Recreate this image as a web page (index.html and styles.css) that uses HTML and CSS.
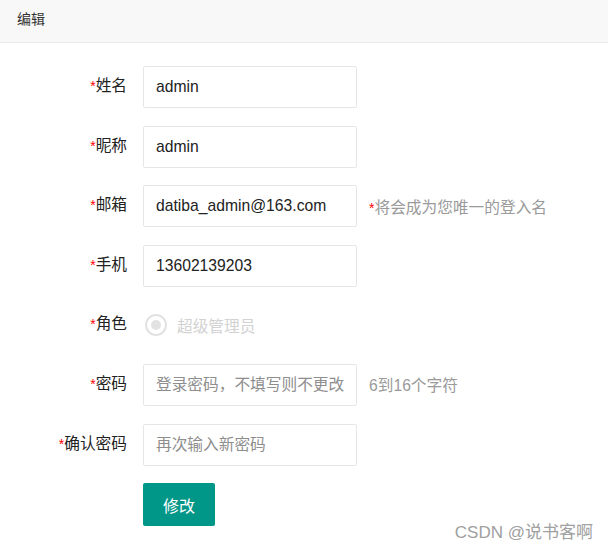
FILE: index.html
```html
<!DOCTYPE html>
<html lang="zh">
<head>
<meta charset="utf-8">
<title>编辑</title>
<link rel="stylesheet" href="styles.css">
</head>
<body>
<div class="card">
  <div class="card-header">编辑</div>
  <form class="form">
    <div class="item">
      <label class="label"><span class="req">*</span>姓名</label>
      <input class="input" type="text" value="admin">
    </div>
    <div class="item">
      <label class="label"><span class="req">*</span>昵称</label>
      <input class="input" type="text" value="admin">
    </div>
    <div class="item">
      <label class="label"><span class="req">*</span>邮箱</label>
      <input class="input" type="text" value="datiba_admin@163.com">
      <div class="aux"><span class="req">*</span>将会成为您唯一的登入名</div>
    </div>
    <div class="item">
      <label class="label"><span class="req">*</span>手机</label>
      <input class="input" type="text" value="13602139203">
    </div>
    <div class="item">
      <label class="label"><span class="req">*</span>角色</label>
      <div class="radio"><span class="radio-icon"></span><span class="radio-text">超级管理员</span></div>
    </div>
    <div class="item">
      <label class="label"><span class="req">*</span>密码</label>
      <input class="input" type="password" placeholder="登录密码，不填写则不更改">
      <div class="aux">6到16个字符</div>
    </div>
    <div class="item">
      <label class="label"><span class="req">*</span>确认密码</label>
      <input class="input" type="password" placeholder="再次输入新密码">
    </div>
    <div class="item item-btn">
      <button class="btn" type="button">修改</button>
    </div>
  </form>
</div>
<div class="watermark">CSDN @说书客啊</div>
</body>
</html>
```

FILE: styles.css
```css
html, body {
  margin: 0;
  padding: 0;
  background: #fff;
}
body {
  font-family: "Liberation Sans", Arial, "Noto Sans CJK SC", sans-serif;
  color: #333;
  width: 608px;
  height: 551px;
  overflow: hidden;
  position: relative;
}
.card-header {
  height: 42px;
  line-height: 39px;
  padding: 0 17px;
  background: #f8f8f8;
  border-bottom: 1px solid #eaeaea;
  font-size: 14px;
  color: #333;
}
.form {
  padding-top: 23px;
  display: flex;
  flex-direction: column;
  gap: 17.6px;
}
.item {
  display: flex;
  align-items: center;
  height: 42px;
}
.item-btn {
  height: 43px;
}
.label {
  width: 127px;
  padding-right: 16px;
  text-align: right;
  font-size: 15.7px;
  line-height: 20px;
  margin-top: -2px;
  color: #222;
  flex: none;
}
.req {
  color: #f00;
  font-size: 14px;
}
.input {
  box-sizing: border-box;
  width: 214px;
  height: 42px;
  border: 1px solid #e6e6e6;
  border-radius: 2px;
  padding: 0 12px;
  font-family: "Liberation Sans", Arial, "Noto Sans CJK SC", sans-serif;
  font-size: 15.7px;
  color: #222;
  background: #fff;
  outline: none;
  flex: none;
  margin: 0;
}
.input::placeholder {
  color: #8e8e8e;
}
.aux {
  margin-left: 12px;
  font-size: 15.7px;
  color: #9a9a9a;
}
.aux .req {
  font-size: 14px;
}
.radio {
  display: flex;
  align-items: center;
  margin-left: 2px;
}
.radio-icon {
  box-sizing: border-box;
  width: 22px;
  height: 22px;
  border: 2px solid #e2e2e2;
  border-radius: 50%;
  display: flex;
  align-items: center;
  justify-content: center;
}
.radio-icon::after {
  content: "";
  width: 10px;
  height: 10px;
  border-radius: 50%;
  background: #e2e2e2;
}
.radio-text {
  margin-left: 10px;
  font-size: 15.7px;
  color: #d2d2d2;
}
.btn {
  margin-left: 143px;
  width: 72px;
  height: 43px;
  border: none;
  border-radius: 2px;
  background: #009688;
  color: #fff;
  font-family: "Liberation Sans", Arial, "Noto Sans CJK SC", sans-serif;
  font-size: 16px;
  padding: 0;
  cursor: pointer;
}
.watermark {
  position: absolute;
  right: 15px;
  bottom: 8px;
  font-size: 17px;
  color: #a0a0a0;
}
```
